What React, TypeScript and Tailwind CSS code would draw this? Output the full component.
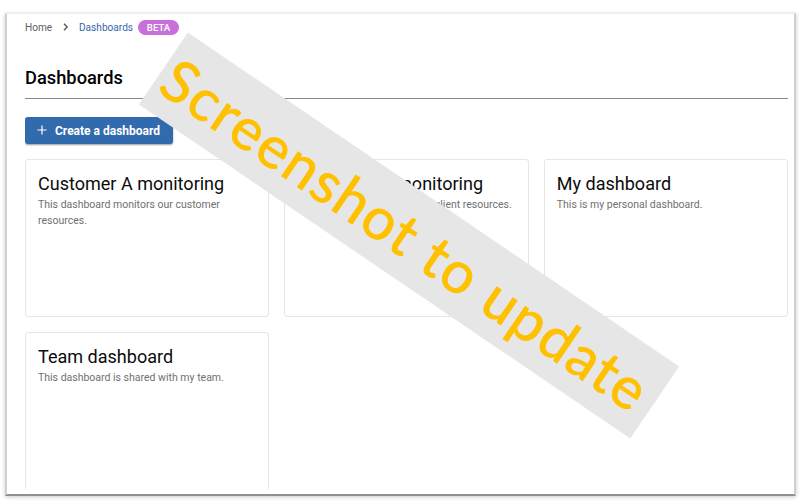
const cards = [
  { title: "Customer A monitoring", text: "This dashboard monitors our customer resources." },
  { title: "Customer B monitoring", text: "This dashboard monitors our client resources." },
  { title: "My dashboard", text: "This is my personal dashboard." },
  { title: "Team dashboard", text: "This dashboard is shared with my team." },
];

function Card({ title, text }: { title: string; text: string }) {
  return (
    <article className="h-[158px] rounded-[3px] border border-[#e6e6e6] px-3 pt-3">
      <h2 className="text-[18.05px] leading-6 whitespace-nowrap text-[#0c0c0c]">{title}</h2>
      <p className="mt-px text-[10.5px] leading-[15.5px] text-[#707070]">{text}</p>
    </article>
  );
}

export default function App() {
  return (
    <div className="relative h-[502px] w-[800px] overflow-hidden bg-white px-[5px] pt-[13px] font-['Roboto',sans-serif]">
      <main className="h-[483px] w-[791px] border-x-2 border-t border-b-2 border-x-[#cfcfcf] border-t-[#ededed] border-b-[#909090] bg-white pl-[18px] shadow-[0_1px_4px_rgba(0,0,0,0.22)]">
        <div className="h-[475px] w-[764px] overflow-hidden">
          <nav className="flex h-[27px] items-center text-[10.1px] text-[#606060]">
            <span className="w-[27px]">Home</span>
            <svg className="mr-[9px] mb-px ml-[9px]" width="9" height="10" viewBox="0 0 9 10" fill="none" stroke="#555" strokeWidth="1.3">
              <path d="M3 1.8 6.2 5 3 8.2" />
            </svg>
            <span className="w-[59px] text-[#346aa9]">Dashboards</span>
            <span className="flex h-[15px] w-[41px] items-center justify-center rounded-full bg-[#c76fda] pt-px text-[9.6px] font-medium text-white">BETA</span>
          </nav>
          <h1 className="mt-[25px] h-[33px] w-[763px] border-b border-[#888] text-[18.3px] leading-6 font-medium text-black">Dashboards</h1>
          <button className="mt-[18px] flex h-[27px] w-[148px] items-center rounded-[3px] bg-[#316bad] pl-[12px] text-[12px] font-bold text-white shadow-[0_1px_2px_rgba(0,0,0,0.4)]">
            <svg className="mr-2 mb-0.5" width="10" height="10" viewBox="0 0 10 10" stroke="white" strokeWidth="1.2">
              <path d="M5 .5v9M.5 5h9" />
            </svg>
            Create a dashboard
          </button>
          <section className="mt-[15px] grid w-[763.2px] grid-cols-3 gap-[15px]">
            {cards.map((card) => <Card key={card.title} {...card} />)}
          </section>
        </div>
      </main>
      <div className="absolute top-[191.5px] left-[112px] h-[87.2px] w-[594px] rotate-[34.2deg] bg-[#e6e6e6] font-['Lato',sans-serif] text-[58px] leading-[88px] whitespace-nowrap text-[#ffc000] [-webkit-text-stroke:0.8px_#ffc000]">
        <span className="ml-[6px] tracking-[1.6px]">Screenshot to update</span>
      </div>
    </div>
  );
}
